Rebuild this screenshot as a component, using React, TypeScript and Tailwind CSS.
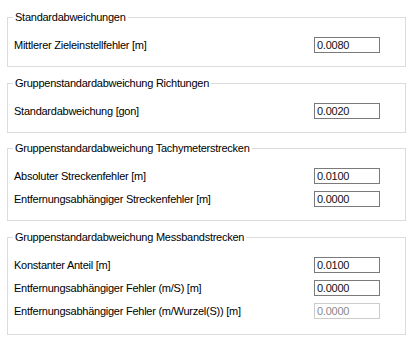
import React from "react";

type Row = { label: string; value: string; disabled?: boolean };
type Group = { title: string; rows: Row[]; spacing: string; bottom: string };

const GROUPS: Group[] = [
  {
    title: "Standardabweichungen",
    spacing: "mt-0",
    bottom: "pb-[13px]",
    rows: [{ label: "Mittlerer Zieleinstellfehler [m]", value: "0.0080" }],
  },
  {
    title: "Gruppenstandardabweichung Richtungen",
    spacing: "mt-[16px]",
    bottom: "pb-[13px]",
    rows: [{ label: "Standardabweichung [gon]", value: "0.0020" }],
  },
  {
    title: "Gruppenstandardabweichung Tachymeterstrecken",
    spacing: "mt-[15px]",
    bottom: "pb-[13px]",
    rows: [
      { label: "Absoluter Streckenfehler [m]", value: "0.0100" },
      { label: "Entfernungsabhängiger Streckenfehler [m]", value: "0.0000" },
    ],
  },
  {
    title: "Gruppenstandardabweichung Messbandstrecken",
    spacing: "mt-[16px]",
    bottom: "pb-[15px]",
    rows: [
      { label: "Konstanter Anteil [m]", value: "0.0100" },
      { label: "Entfernungsabhängiger Fehler (m/S) [m]", value: "0.0000" },
      {
        label: "Entfernungsabhängiger Fehler (m/Wurzel(S)) [m]",
        value: "0.0000",
        disabled: true,
      },
    ],
  },
];

const ValueBox: React.FC<Row> = ({ value, disabled }) => (
  <input
    type="text"
    defaultValue={value}
    disabled={disabled}
    className={
      disabled
        ? "block w-[66px] h-[16px] border border-[#cccccc] bg-white px-[2px] text-[11px] leading-[14px] text-[#8a8a8a] outline-none"
        : "block w-[66px] h-[16px] border border-[#7a7a7a] bg-white px-[2px] text-[11px] leading-[14px] text-[#111] outline-none"
    }
  />
);

// group box: border line with the caption sitting on top of it
const GroupBox: React.FC<{ group: Group }> = ({ group }) => (
  <div
    className={`relative ${group.spacing} border border-[#dcdcdc] pl-[6px] pr-[25px] pt-[19px] ${group.bottom}`}
  >
    <span className="absolute left-[5px] -top-[7px] bg-white px-[2px] text-[11px] leading-[13px] text-black">
      {group.title}
    </span>
    <div className="flex flex-col gap-[7px]">
      {group.rows.map((row) => (
        <div key={row.label} className="flex items-center justify-between">
          <span className="text-[11px] leading-[13px] text-black">{row.label}</span>
          <ValueBox {...row} />
        </div>
      ))}
    </div>
  </div>
);

const App: React.FC = () => {
  return (
    <div
      className="w-[412px] h-[339px] overflow-hidden bg-white pl-[7px] pr-[6px] pt-[17px] tracking-[-0.25px]"
      style={{ fontFamily: '"Liberation Sans", Arial, sans-serif' }}
    >
      {GROUPS.map((g) => (
        <GroupBox key={g.title} group={g} />
      ))}
    </div>
  );
};

export default App;
